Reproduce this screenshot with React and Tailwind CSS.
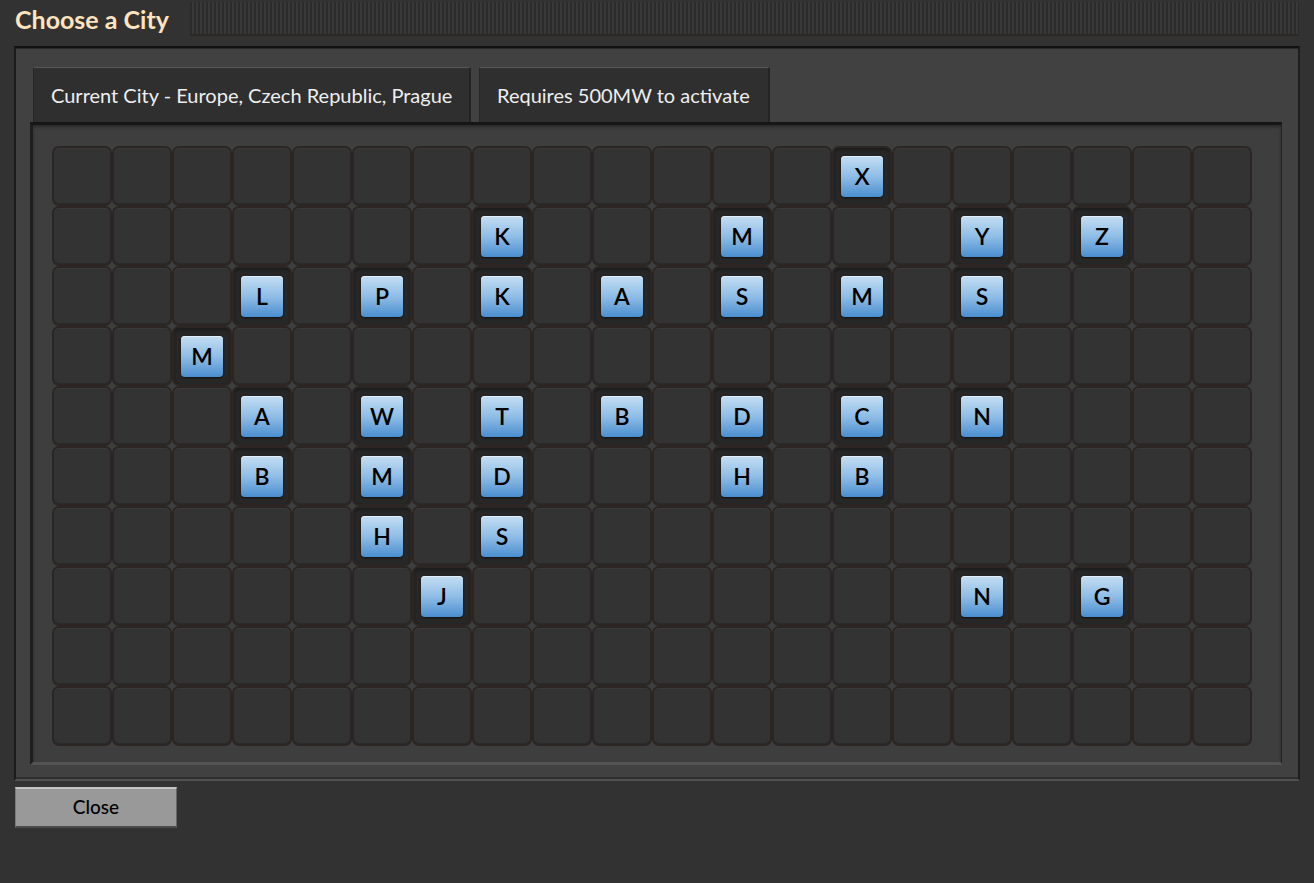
import React from 'react';

const ROWS = [
  '.............X......',
  '.......K...M...Y.Z..',
  '...L.P.K.A.S.M.S....',
  '..M.................',
  '...A.W.T.B.D.C.N....',
  '...B.M.D...H.B......',
  '.....H.S............',
  '......J........N.G..',
  '....................',
  '....................',
];

function Cell({ letter }) {
  if (letter === '.') {
    return (
      <div className="w-[56px] h-[56px] rounded-[5px] bg-[#333333] shadow-[0_0_0_2px_#2b2624,inset_0_1px_0_#3a3a3a,inset_0_-1px_0_#2a2a2a]" />
    );
  }
  return (
    <div className="w-[56px] h-[56px] rounded-[5px] bg-[#272727] shadow-[0_0_0_2px_#2b2624,inset_0_2px_3px_#1c1c1c] flex items-center justify-center">
      <div className="w-[42px] h-[41px] rounded-[4px] bg-gradient-to-b from-[#c4def3] via-[#8fbde6] to-[#4a8ecf] shadow-[0_1px_2px_#111,inset_0_1px_0_#e2f0fb] flex items-center justify-center text-[23px] font-semibold text-black leading-none">
        {letter}
      </div>
    </div>
  );
}

export default function App() {
  return (
    <div className="w-[1314px] h-[883px] bg-[#323232] font-['Lato','Liberation_Sans',sans-serif] overflow-hidden">
      {/* title bar */}
      <div className="flex h-[46px]">
        <div className="w-[190px] pl-[15px] pt-[2px] text-[25px] font-bold text-[#ffe3bd] leading-[34px]">
          Choose a City
        </div>
        <div className="w-[1109px] h-[34px] mt-[2px] bg-[repeating-linear-gradient(90deg,#2b2b2b_0px,#2b2b2b_2px,#393939_2px,#393939_4px)] shadow-[inset_0_-2px_0_#2c2826]" />
      </div>

      {/* main panel */}
      <div className="ml-[14px] w-[1286px] h-[735px] bg-[#414141] border-t-2 border-l-2 border-r-2 border-b-2 border-t-[#111111] border-l-[#1b1b1b] border-r-[#1e1e1e] border-b-[#505050] shadow-[inset_0_1px_0_#2a2a2a,inset_0_-2px_0_#2e2e2e] pt-[19px] pl-[14px]">
        <div className="flex gap-[8px] ml-[3px] h-[55px]">
          <div className="w-[438px] h-[55px] bg-[#2f2f2f] border-t border-t-[#5a5656] border-l border-l-[#262626] border-r-2 border-r-[#242424] flex items-center pl-[17px] text-[20px] text-[#eeeeee]">
            Current City - Europe, Czech Republic, Prague
          </div>
          <div className="w-[291px] h-[55px] bg-[#2f2f2f] border-t border-t-[#5a5656] border-l border-l-[#262626] border-r-2 border-r-[#242424] flex items-center pl-[17px] text-[20px] text-[#eeeeee]">
            Requires 500MW to activate
          </div>
        </div>

        {/* grid frame */}
        <div className="w-[1252px] h-[643px] border-t-[3px] border-l-[3px] border-t-[#161616] border-l-[#1e1e1e] border-r border-r-[#222222] border-b-[3px] border-b-[#555252] bg-[#3e3e3e] shadow-[inset_0_2px_3px_#2a2a2a] pt-[23px] pl-[21px]">
          <div className="grid grid-cols-[repeat(20,56px)] gap-[4px]">
            {ROWS.map((row, r) =>
              row.split('').map((ch, c) => <Cell key={r + '-' + c} letter={ch} />)
            )}
          </div>
        </div>
      </div>

      {/* close */}
      <div className="pl-[15px] pt-[6px]">
        <button className="w-[162px] h-[41px] bg-[#999999] border-t-2 border-t-[#c4c4c4] border-b-2 border-b-[#4a4a4a] border-l border-l-[#7a7a7a] border-r border-r-[#666666] text-[19px] text-black font-medium flex items-center justify-center">
          Close
        </button>
      </div>
    </div>
  );
}
